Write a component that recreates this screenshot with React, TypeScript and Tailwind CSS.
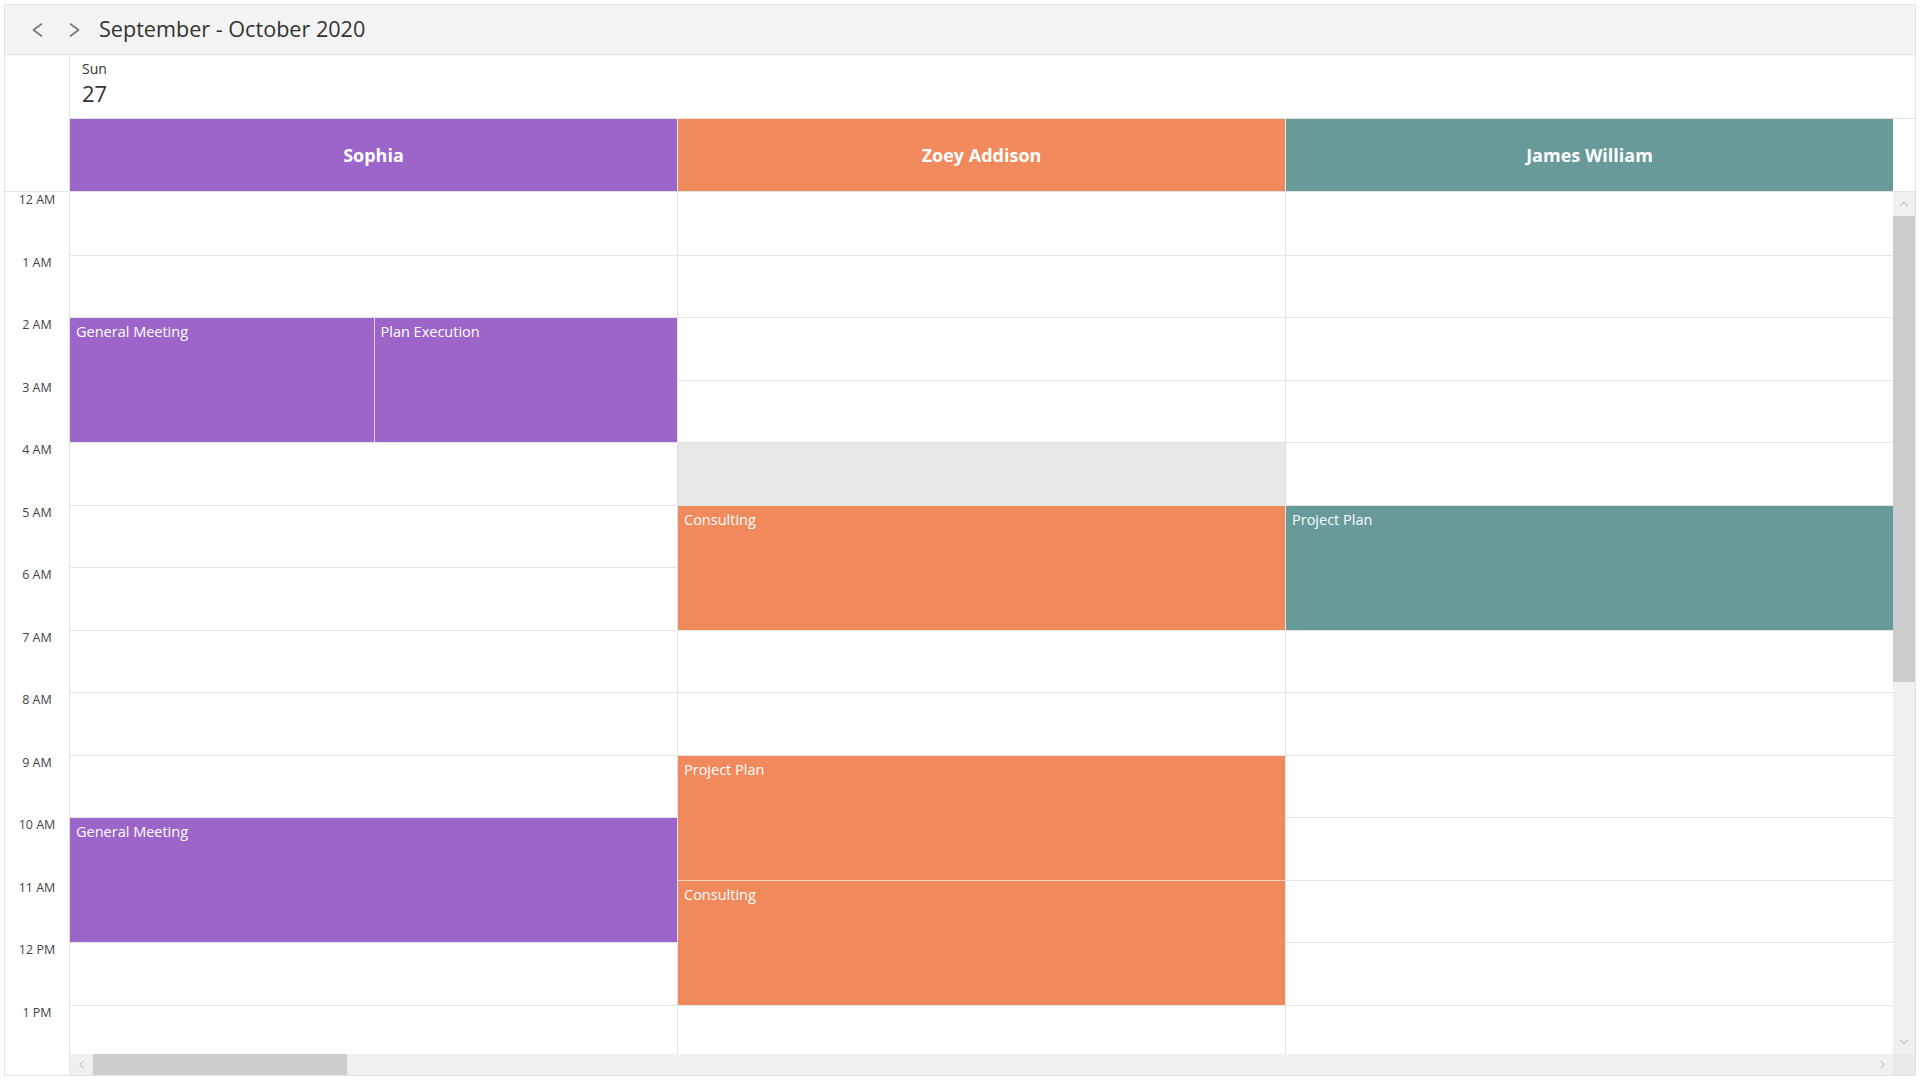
import { ChevronLeft, ChevronRight, ChevronUp, ChevronDown } from 'lucide-react';

const HOUR = 62.5;

const hours = ['12 AM', '1 AM', '2 AM', '3 AM', '4 AM', '5 AM', '6 AM', '7 AM', '8 AM', '9 AM', '10 AM', '11 AM', '12 PM', '1 PM'];

type Ev = { title: string; start: number; end: number; half?: 'left' | 'right' };

const resources: { name: string; bg: string; events: Ev[]; blocked?: { start: number; end: number } }[] = [
  {
    name: 'Sophia',
    bg: 'bg-[#9c65c9]',
    events: [
      { title: 'General Meeting', start: 2, end: 4, half: 'left' },
      { title: 'Plan Execution', start: 2, end: 4, half: 'right' },
      { title: 'General Meeting', start: 10, end: 12 },
    ],
  },
  {
    name: 'Zoey Addison',
    bg: 'bg-[#f08a5c]',
    blocked: { start: 4, end: 5 },
    events: [
      { title: 'Consulting', start: 5, end: 7 },
      { title: 'Project Plan', start: 9, end: 11 },
      { title: 'Consulting', start: 11, end: 13 },
    ],
  },
  {
    name: 'James William',
    bg: 'bg-[#679a99]',
    events: [{ title: 'Project Plan', start: 5, end: 7 }],
  },
];

function NavArrow({ dir }: { dir: 'left' | 'right' }) {
  return (
    <svg width="11" height="14" viewBox="0 0 11 14" fill="none" stroke="#777" strokeWidth="1.6" strokeLinecap="round" strokeLinejoin="round">
      {dir === 'left' ? <polyline points="9.5,1 1.5,7 9.5,13" /> : <polyline points="1.5,1 9.5,7 1.5,13" />}
    </svg>
  );
}

export default function App() {
  return (
    <div className="w-[1920px] h-[1080px] bg-white p-[4px] font-['Segoe_UI','Open_Sans',sans-serif] text-[#333]">
      <div className="h-[1072px] border border-[#e2e2e2] flex flex-col">
        {/* Toolbar */}
        <div className="h-[50px] shrink-0 bg-[#f3f3f3] border-b border-[#e2e2e2] flex items-center pl-[27px]">
          <NavArrow dir="left" />
          <div className="ml-[26px]">
            <NavArrow dir="right" />
          </div>
          <span className="ml-[19px] text-[21.6px] text-[#333] leading-none mb-[2px]">September - October 2020</span>
        </div>

        <div className="flex flex-1 min-h-0">
          {/* Time column */}
          <div className="w-[65px] shrink-0 border-r border-[#e2e2e2] flex flex-col">
            <div className="h-[137px] shrink-0 border-b border-[#e2e2e2]" />
            <div className="flex-1 overflow-hidden">
              {hours.map((h) => (
                <div key={h} className="h-[62.5px] text-center text-[12.5px] text-[#444] leading-[16px]">
                  {h}
                </div>
              ))}
            </div>
          </div>

          <div className="flex-1 flex flex-col min-w-0">
            {/* Date header */}
            <div className="h-[64px] shrink-0 pl-[12px] pt-[5px] border-b border-[#e2e2e2]">
              <div className="text-[14px] text-[#333] leading-[18px]">Sun</div>
              <div className="text-[22px] text-[#333] leading-[30px]">27</div>
            </div>

            {/* Resource header */}
            <div className="h-[73px] shrink-0 flex border-b border-[#e2e2e2]">
              {resources.map((r, i) => (
                <div
                  key={r.name}
                  className={`flex-1 flex items-center justify-center text-white font-bold text-[18px] ${r.bg} ${i > 0 ? 'border-l border-[#e8e8e8]' : ''}`}
                >
                  {r.name}
                </div>
              ))}
              <div className="w-[22px] shrink-0 bg-white" />
            </div>

            {/* Grid + vertical scrollbar */}
            <div className="flex-1 flex min-h-0">
              <div className="flex-1 flex overflow-hidden">
                {resources.map((r, i) => (
                  <div key={r.name} className={`flex-1 relative ${i > 0 ? 'border-l border-[#e2e2e2]' : ''}`}>
                    {hours.map((h, k) => (
                      <div key={h} className={`h-[62.5px] ${k > 0 ? 'border-t border-[#e6e6e6]' : ''}`} />
                    ))}
                    {r.blocked && (
                      <div
                        className="absolute left-0 right-0 bg-[#e8e8e8] border-t border-[#e0e0e0]"
                        style={{ top: r.blocked.start * HOUR, height: (r.blocked.end - r.blocked.start) * HOUR }}
                      />
                    )}
                    {r.events.map((e, j) => (
                      <div
                        key={j}
                        className={`absolute ${r.bg} border-t border-[#e4e4e4] text-white text-[14.5px] leading-[18px] pl-[6px] pt-[5px] ${
                          e.half === 'left' ? 'left-0 w-1/2' : e.half === 'right' ? 'left-1/2 right-0 border-l border-l-[#e0d4ec]' : 'left-0 right-0'
                        } ${j > 0 && e.start === r.events[j - 1].end && !e.half ? 'border-t-[#f6d2c0]' : ''}`}
                        style={{ top: e.start * HOUR, height: (e.end - e.start) * HOUR }}
                      >
                        {e.title}
                      </div>
                    ))}
                  </div>
                ))}
              </div>
              <div className="w-[22px] shrink-0 bg-[#f0f0f0] flex flex-col items-center">
                <div className="h-[24px] w-full flex items-center justify-center">
                  <ChevronUp size={14} strokeWidth={1.5} className="text-[#9a9a9a]" />
                </div>
                <div className="h-[466px] w-full bg-[#cdcdcd]" />
                <div className="flex-1" />
                <div className="h-[24px] w-full flex items-center justify-center">
                  <ChevronDown size={14} strokeWidth={1.5} className="text-[#9a9a9a]" />
                </div>
              </div>
            </div>

            {/* Horizontal scrollbar */}
            <div className="h-[21px] shrink-0 flex bg-[#f0f0f0]">
              <div className="w-[23px] flex items-center justify-center">
                <ChevronLeft size={13} strokeWidth={1.5} className="text-[#9a9a9a]" />
              </div>
              <div className="w-[254px] bg-[#cdcdcd]" />
              <div className="flex-1" />
              <div className="w-[22px] flex items-center justify-center">
                <ChevronRight size={13} strokeWidth={1.5} className="text-[#9a9a9a]" />
              </div>
              <div className="w-[22px] bg-[#eaeaea]" />
            </div>
          </div>
        </div>
      </div>
    </div>
  );
}
